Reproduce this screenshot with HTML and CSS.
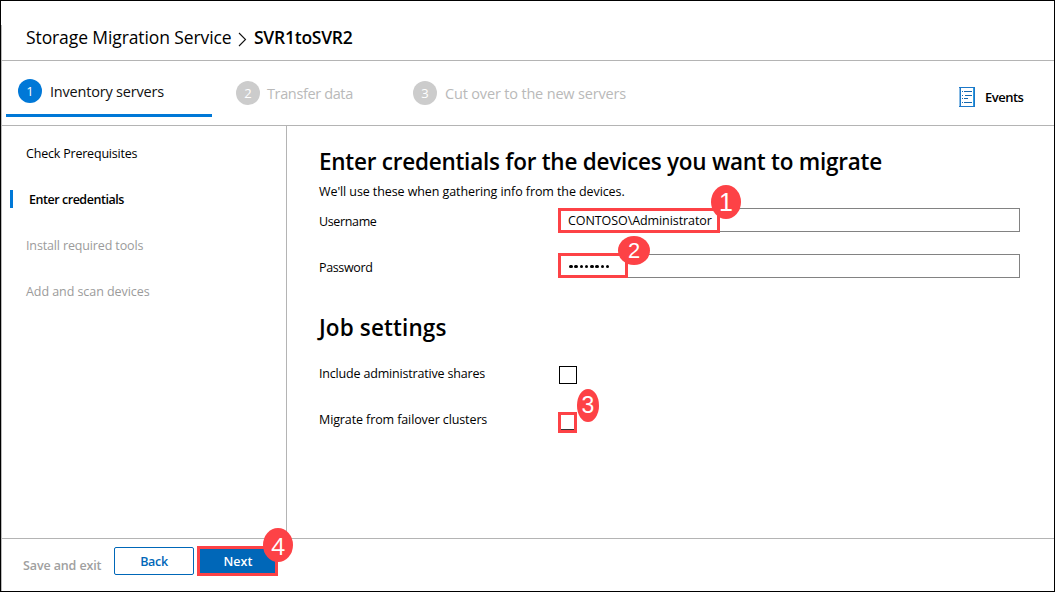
FILE: index.html
```html
<!DOCTYPE html>
<html lang="en">
<head>
<meta charset="utf-8">
<title>Storage Migration Service</title>
<link rel="stylesheet" href="styles.css">
</head>
<body>
<div class="window">
  <header class="breadcrumb">
    <span class="crumb">Storage Migration Service</span>
    <svg class="chevron" width="9" height="15" viewBox="0 0 9 15"><path d="M1 1l6.500 6.500L1 14" fill="none" stroke="#111" stroke-width="1.100"/></svg>
    <strong class="job">SVR1toSVR2</strong>
  </header>
  <nav class="steps">
    <div class="step active"><span class="num">1</span><span class="step-label inventory">Inventory servers</span></div>
    <div class="step transfer"><span class="num">2</span><span class="step-label transfer-label">Transfer data</span></div>
    <div class="step cutover"><span class="num">3</span><span class="step-label cutover-label">Cut over to the new servers</span></div>
    <div class="events">
      <svg width="16" height="20" viewBox="0 0 16 20" shape-rendering="crispEdges"><path d="M0 0h16v20H0z" fill="#1d78c8"/><path d="M2 1h12v18H2z" fill="#fff"/><path d="M0 1h1v18H0z" fill="#8abce5"/><path d="M14 1h1v18h-1z" fill="#2b9be0"/><path d="M3 4.500h1M3 8.500h1M3 11.500h1M3 15.500h1M5 4.500h8M6 8.500h7M5 11.500h4M5 15.500h8" stroke="#1668af"/></svg>
      <span class="events-label">Events</span>
    </div>
  </nav>
  <div class="body">
    <aside class="sidebar">
      <div class="item"><span class="i1">Check Prerequisites</span></div>
      <div class="item current"><span class="i2">Enter credentials</span></div>
      <div class="item pending"><span class="i3">Install required tools</span></div>
      <div class="item pending"><span class="i4">Add and scan devices</span></div>
    </aside>
    <main class="content">
      <h1 class="heading">Enter credentials for the devices you want to migrate</h1>
      <p class="intro">We'll use these when gathering info from the devices.</p>
      <div class="row user-row"><span class="label user">Username</span>
        <div class="field"><div class="mark mark-user"><span class="value">CONTOSO\Administrator</span><span class="badge b1">1</span></div></div>
      </div>
      <div class="row pass-row"><span class="label pass">Password</span>
        <div class="field"><div class="mark mark-pass"><span class="dots"><i></i><i></i><i></i><i></i><i></i><i></i><i></i><i></i></span><span class="badge b2">2</span></div></div>
      </div>
      <h2 class="subheading">Job settings</h2>
      <div class="row"><span class="label include">Include administrative shares</span><span class="check"></span></div>
      <div class="row"><span class="label migrate">Migrate from failover clusters</span><span class="check marked"><span class="badge b3">3</span></span></div>
    </main>
  </div>
  <footer class="footer">
    <span class="save">Save and exit</span>
    <div class="btn back">Back</div>
    <div class="btn next">Next<span class="badge b4">4</span></div>
  </footer>
</div>
</body>
</html>
```
FILE: styles.css
```css
* { box-sizing: border-box; }
body { margin: 0; background: #fff; color: #000; font-family: "Open Sans", "Noto Sans", sans-serif; font-size: 12.5px; }
.window { width: 1055px; height: 592px; border: 1px solid #000; display: flex; flex-direction: column; overflow: hidden; white-space: nowrap; background: linear-gradient(#bbb, #bbb) 0 24px / 1px 100% no-repeat; }
.breadcrumb { height: 60px; border-bottom: 1px solid #b4b4b4; margin-left: 1px; padding: 13px 0 0 24px; display: flex; align-items: center; font-size: 17.5px; flex: none; }
.crumb { width: 212px; letter-spacing: -.1px; }
.chevron { margin-top: 4px; }
.job { font-weight: 600; margin-left: 7px; letter-spacing: -.25px; }
.steps { height: 65px; flex: none; margin-left: 1px; border-bottom: 1px solid #b4b4b4; display: flex; align-items: flex-start; font-size: 14.5px; color: #b9b9b9; }
.step { display: flex; align-items: center; }
.num { width: 24px; height: 24px; border-radius: 50%; background: #ccc; color: #fff; font-size: 13px; display: flex; align-items: center; justify-content: center; margin-right: 8px; }
.active { width: 206px; height: 56px; margin-left: 4px; padding: 7px 0 0 12px; border-bottom: 3px solid #0078d7; color: #111; }
.active .num { background: #0078d7; }
.inventory { letter-spacing: -.2px; padding-top: 1px; }
.transfer { margin: 20px 0 0 24px; width: 177px; }
.transfer-label { letter-spacing: -.37px; margin-left: -1px; }
.cutover { margin-top: 20px; width: 546px; }
.cutover-label { letter-spacing: -.17px; }
.events { display: flex; align-items: center; margin-top: 26px; color: #000; font-size: 13px; font-weight: 600; }
.events-label { margin-left: 10px; letter-spacing: -.5px; }
.body { display: flex; flex: none; height: 412px; margin-left: 1px; }
.sidebar { width: 285px; border-right: 1px solid #b4b4b4; padding-top: 4px; }
.item { height: 46px; padding-left: 24px; display: flex; align-items: center; }
.i1 { letter-spacing: -.2px; }
.i2 { letter-spacing: -.46px; }
.i3 { letter-spacing: -.14px; }
.i4 { letter-spacing: -.06px; }
.current { font-weight: 600; padding-left: 8px; }
.current::before { content: ""; width: 3px; height: 18px; background: #0078d7; margin-right: 16px; }
.pending { color: #9b9b9b; }
.content { padding: 20px 0 0 32px; width: 733px; }
.heading, .subheading { margin: 0; font-size: 22.5px; line-height: 32px; font-weight: 600; }
.heading { letter-spacing: -.245px; }
.intro { margin: 4px 0 0; line-height: 20px; letter-spacing: -.09px; }
.row { display: flex; align-items: center; height: 46px; position: relative; }
.user-row { height: 24px; margin-top: 6px; }
.pass-row { height: 24px; margin-top: 22px; }
.label { width: 239px; flex: none; padding-bottom: 1px; }
.user, .pass { padding-top: 3px; letter-spacing: -.36px; }
.include { letter-spacing: -.18px; }
.migrate { letter-spacing: -.11px; }
.field { width: 462px; height: 24px; border: 1px solid #828282; flex: none; }
.mark { border: 3px solid #fd4246; height: 25px; margin: -1px 0 0 -1px; position: relative; display: flex; align-items: center; padding-left: 7px; background: #fff; }
.value { letter-spacing: -.08px; }
.mark-user { width: 162px; }
.mark-pass { width: 70px; margin-top: -2px; }
.dots { display: flex; gap: 1.750px; padding: 2px 0 0 1px; }
.dots i { width: 3.500px; height: 3.500px; border-radius: 50%; background: #000; }
.badge { position: absolute; border-radius: 50%; background: #fd4246; color: #fff; display: flex; align-items: center; justify-content: center; font: 22px "Liberation Sans", sans-serif; letter-spacing: 0; }
.b1 { width: 30px; height: 34px; left: 150px; top: -26px; font-size: 25px; }
.b2 { width: 32px; height: 29px; left: 57px; top: -20px; }
.b3 { width: 22px; height: 33px; left: 16px; top: -26px; font-size: 23px; }
.b4 { width: 30px; height: 34px; left: 63px; top: -21px; font: 24px "Open Sans", sans-serif; }
.subheading { margin: 34px 0 7px; letter-spacing: .12px; }
.check { width: 18px; height: 18px; border: 1px solid #000; margin: 1px 0 0 1px; flex: none; }
.marked { width: 19px; height: 21px; border: 3px solid #fd4246; margin: 4px 0 0; position: relative; box-shadow: inset 0 -1px #333; }
.footer { border-top: 1px solid #b4b4b4; margin-left: 1px; flex: 1; display: flex; align-items: flex-start; padding-left: 21px; font-weight: 600; }
.save { width: 91px; margin-top: 18px; line-height: 18px; color: #a0a0a0; letter-spacing: -.12px; }
.btn { display: flex; align-items: center; justify-content: center; position: relative; }
.back { width: 80px; height: 28px; margin-top: 8px; border: 1px solid #0067b8; border-radius: 2px; color: #0067b8; letter-spacing: -.3px; }
.next { width: 81px; height: 30px; margin: 7px 0 0 3px; border: 3px solid #fd4246; background: #0067b8; color: #fff; padding-left: 1px; }
```
